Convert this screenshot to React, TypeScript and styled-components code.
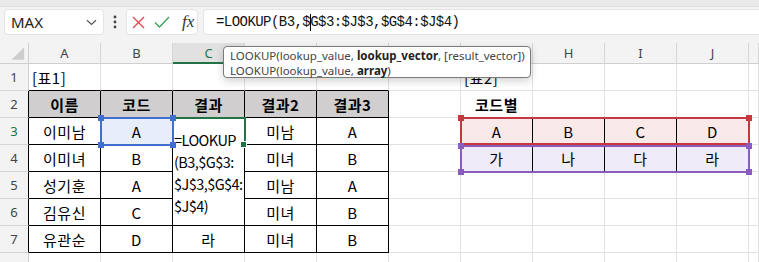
import React from 'react';
import styled, { createGlobalStyle } from 'styled-components';

const GlobalStyle = createGlobalStyle`
  html, body {
    margin: 0;
    padding: 0;
    background: #ffffff;
  }
  body {
    width: 759px;
    height: 262px;
    overflow: hidden;
    font-family: 'Noto Sans CJK KR', 'Noto Sans', sans-serif;
  }
`;

const COLS = ['A', 'B', 'C', 'D', 'E', 'F', 'G', 'H', 'I', 'J', 'K'];
const ROWS = [1, 2, 3, 4, 5, 6, 7, 8];

const table1: string[][] = [
  ['이름', '코드', '결과', '결과2', '결과3'],
  ['이미남', 'A', '', '미남', 'A'],
  ['이미녀', 'B', '', '미녀', 'B'],
  ['성기훈', 'A', '', '미남', 'A'],
  ['김유신', 'C', '', '미녀', 'B'],
  ['유관순', 'D', '라', '미녀', 'B'],
];

const table2: string[][] = [
  ['A', 'B', 'C', 'D'],
  ['가', '나', '다', '라'],
];

const editLines = ['=LOOKUP', '(B3,$G$3:', '$J$3,$G$4:', '$J$4)'];

type CellInfo = {
  text: string;
  align: 'left' | 'center';
  bold?: boolean;
  bg?: string;
  right: boolean;
  bottom: boolean;
};

// r is the sheet row (1-based), c is the column index (A = 0)
const cellAt = (r: number, c: number): CellInfo => {
  const inT1 = r >= 2 && r <= 7 && c <= 4;
  const inT2 = r >= 3 && r <= 4 && c >= 6 && c <= 9;
  const info: CellInfo = {
    text: '',
    align: 'center',
    right: inT1 || inT2 || (c === 5 && (r === 3 || r === 4)),
    bottom: inT1 || inT2 || (r === 1 && c <= 4) || (r === 2 && c >= 6 && c <= 9),
  };
  if (r === 1 && c === 0) return { ...info, text: '[표1]', align: 'left' };
  if (r === 1 && c === 6) return { ...info, text: '[표2]', align: 'left' };
  if (r === 2 && c === 6) return { ...info, text: '코드별', bold: true };
  if (inT1) {
    return {
      ...info,
      text: table1[r - 2][c],
      bold: r === 2,
      bg: r === 2 ? '#d0cece' : r === 3 && c === 1 ? '#e8eef9' : undefined,
    };
  }
  if (inT2) {
    return { ...info, text: table2[r - 3][c - 6], bg: r === 3 ? '#f9e9e9' : '#efebf8' };
  }
  return info;
};

export default function App() {
  return (
    <>
      <GlobalStyle />
      <Toolbar>
        <TopStrip />
        <BarRow>
          <NameBox>
            <span>MAX</span>
            <svg width="11" height="7" viewBox="0 0 11 7">
              <path d="M1 1.2 L5.5 5.5 L10 1.2" fill="none" stroke="#555" strokeWidth="1.2" />
            </svg>
          </NameBox>
          <Dots>
            <svg width="4" height="14" viewBox="0 0 4 14">
              <circle cx="2" cy="2" r="1.4" fill="#444" />
              <circle cx="2" cy="7" r="1.4" fill="#444" />
              <circle cx="2" cy="12" r="1.4" fill="#444" />
            </svg>
          </Dots>
          <FxBox>
            <svg width="13" height="13" viewBox="0 0 13 13">
              <path d="M1 1 L12 12 M12 1 L1 12" stroke="#e0454c" strokeWidth="1.3" fill="none" />
            </svg>
            <svg width="16" height="12" viewBox="0 0 16 12">
              <path d="M1 6.5 L5.5 11 L15 1" stroke="#3aa05a" strokeWidth="1.3" fill="none" />
            </svg>
            <Fx>fx</Fx>
          </FxBox>
          <FormulaBox>
            =LOOKUP(B3,$<Caret />G$3:$J$3,$G$4:$J$4)
          </FormulaBox>
        </BarRow>
      </Toolbar>

      <Sheet>
        <Corner>
          <svg width="29" height="21" viewBox="0 0 29 21">
            <polygon points="12,17 25,17 25,4" fill="#cdcdcd" />
          </svg>
        </Corner>
        {COLS.map((col, c) => (
          <ColHead key={col} $gc={c + 2} $active={col === 'C'}>
            {col === 'K' ? '' : col}
          </ColHead>
        ))}

        {ROWS.map((r) => (
          <React.Fragment key={r}>
            <RowHead $gr={r + 1} $active={r === 3} $edge={r >= 2 && r <= 7}>
              {r}
            </RowHead>
            {COLS.map((col, c) => {
              const cell = cellAt(r, c);
              return (
                <Cell
                  key={col}
                  $gc={c + 2}
                  $gr={r + 1}
                  $align={cell.align}
                  $bold={cell.bold}
                  $bg={cell.bg}
                  $right={cell.right}
                  $bottom={cell.bottom}
                >
                  {cell.text}
                </Cell>
              );
            })}
          </React.Fragment>
        ))}

        <EditBox>
          {editLines.map((line) => (
            <div key={line}>{line}</div>
          ))}
        </EditBox>

        <ActiveBox>
          <FillHandle />
        </ActiveBox>

        <RangeBox $col="3" $row="4" $color="#3f6fd1" $mt={-1} $mb={-1}>
          <Handle $color="#3f6fd1" $x="left" $y="top" />
          <Handle $color="#3f6fd1" $x="right" $y="top" />
          <Handle $color="#3f6fd1" $x="left" $y="bottom" />
          <Handle $color="#3f6fd1" $x="right" $y="bottom" />
        </RangeBox>

        <RangeBox $col="8 / 12" $row="4" $color="#c8373f" $mt={-1} $mb={0}>
          <Handle $color="#c8373f" $x="left" $y="top" />
          <Handle $color="#c8373f" $x="right" $y="top" />
        </RangeBox>

        <RangeBox $col="8 / 12" $row="5" $color="#8a5cc0" $mt={0} $mb={-1}>
          <Handle $color="#8a5cc0" $x="left" $y="top" />
          <Handle $color="#8a5cc0" $x="right" $y="top" />
          <Handle $color="#8a5cc0" $x="left" $y="bottom" />
          <Handle $color="#8a5cc0" $x="right" $y="bottom" />
        </RangeBox>

        <Tooltip>
          <div>
            LOOKUP(lookup_value, <b>lookup_vector</b>, [result_vector])
          </div>
          <div>
            LOOKUP(lookup_value, <b>array</b>)
          </div>
        </Tooltip>
      </Sheet>
    </>
  );
}

const Toolbar = styled.div`
  height: 43px;
  background: #f3f3f3;
  display: flex;
  flex-direction: column;
`;

const TopStrip = styled.div`
  height: 6px;
  background: #eaeaea;
  border-bottom: 1px solid #dedede;
`;

const BarRow = styled.div`
  display: flex;
  align-items: flex-start;
  padding: 2px 0 0 4px;
`;

const NameBox = styled.div`
  box-sizing: border-box;
  width: 100px;
  height: 26px;
  background: #ffffff;
  border: 1px solid #e4e4e4;
  border-radius: 4px;
  display: flex;
  align-items: center;
  justify-content: space-between;
  padding: 0 6px 0 6px;
  font-family: 'Noto Sans', sans-serif;
  font-size: 15px;
  color: #222;
`;

const Dots = styled.div`
  width: 22px;
  height: 26px;
  display: flex;
  align-items: center;
  justify-content: center;
`;

const FxBox = styled.div`
  box-sizing: border-box;
  width: 72px;
  height: 26px;
  background: #ffffff;
  border: 1px solid #e4e4e4;
  border-radius: 4px;
  display: flex;
  align-items: center;
  gap: 9px;
  padding-left: 5px;
`;

const Fx = styled.span`
  font-family: 'Liberation Serif', serif;
  font-style: italic;
  font-size: 17px;
  color: #333;
  margin-left: 3px;
`;

const FormulaBox = styled.div`
  box-sizing: border-box;
  flex: 1;
  height: 26px;
  margin-left: 5px;
  background: #ffffff;
  border: 1px solid #e4e4e4;
  border-right: none;
  border-radius: 4px 0 0 4px;
  padding-left: 12px;
  display: flex;
  align-items: center;
  font-family: 'Liberation Mono', monospace;
  font-size: 14px;
  letter-spacing: -0.55px;
  color: #111;
  white-space: pre;
`;

const Caret = styled.span`
  display: inline-block;
  width: 1px;
  height: 17px;
  background: #000;
  margin: 0 -1px 0 0;
`;

const Sheet = styled.div`
  position: relative;
  display: grid;
  grid-template-columns: 29px repeat(10, 72px) 1fr;
  grid-template-rows: 21px repeat(8, 27px);
  background: #ffffff;
`;

const Corner = styled.div`
  grid-column: 1;
  grid-row: 1;
  background: #f3f3f3;
  border-right: 1px solid #cfcfcf;
  border-bottom: 1px solid #cfcfcf;
  box-sizing: border-box;
  display: flex;
  svg {
    display: block;
  }
`;

const ColHead = styled.div<{ $gc: number; $active?: boolean }>`
  grid-column: ${(p) => p.$gc};
  grid-row: 1;
  box-sizing: border-box;
  display: flex;
  align-items: center;
  justify-content: center;
  background: ${(p) => (p.$active ? '#e1e1e1' : '#f3f3f3')};
  border-right: 1px solid #d6d6d6;
  border-bottom: ${(p) => (p.$active ? '2px solid #217346' : '1px solid #cfcfcf')};
  font-family: 'Noto Sans', sans-serif;
  font-size: 13px;
  color: ${(p) => (p.$active ? '#217346' : '#444')};
`;

const RowHead = styled.div<{ $gr: number; $active?: boolean; $edge?: boolean }>`
  grid-column: 1;
  grid-row: ${(p) => p.$gr};
  box-sizing: border-box;
  display: flex;
  align-items: center;
  justify-content: center;
  background: #f3f3f3;
  border-right: 1px solid ${(p) => (p.$edge ? '#000' : '#cfcfcf')};
  border-bottom: 1px solid #d6d6d6;
  font-family: 'Noto Sans', sans-serif;
  font-size: 13px;
  color: ${(p) => (p.$active ? '#217346' : '#444')};
`;

const Cell = styled.div<{
  $gc: number;
  $gr: number;
  $align: 'left' | 'center';
  $bold?: boolean;
  $bg?: string;
  $right: boolean;
  $bottom: boolean;
}>`
  grid-column: ${(p) => p.$gc};
  grid-row: ${(p) => p.$gr};
  box-sizing: border-box;
  display: flex;
  align-items: center;
  justify-content: ${(p) => (p.$align === 'left' ? 'flex-start' : 'center')};
  padding: 0 3px;
  background: ${(p) => p.$bg || '#ffffff'};
  border-right: 1px solid ${(p) => (p.$right ? '#000' : '#e1e1e1')};
  border-bottom: 1px solid ${(p) => (p.$bottom ? '#000' : '#e1e1e1')};
  font-size: 15px;
  letter-spacing: 0.5px;
  font-weight: ${(p) => (p.$bold ? 700 : 400)};
  color: #000;
  white-space: nowrap;
`;

const EditBox = styled.div`
  grid-column: 4;
  grid-row: 4 / 8;
  z-index: 1;
  box-sizing: border-box;
  background: #ffffff;
  border-right: 1px solid #000;
  border-bottom: 1px solid #000;
  padding: 11px 0 0 1px;
  font-size: 14.5px;
  letter-spacing: -0.55px;
  line-height: 22px;
  color: #000;
  white-space: nowrap;
  overflow: hidden;
`;

const ActiveBox = styled.div`
  grid-column: 4;
  grid-row: 4;
  z-index: 2;
  position: relative;
  margin: -1px -1px 0 -1px;
  border: 2px solid #217346;
  border-bottom: none;
  pointer-events: none;
`;

const FillHandle = styled.div`
  position: absolute;
  right: -3px;
  bottom: -3px;
  width: 5px;
  height: 5px;
  background: #217346;
  border: 1px solid #ffffff;
`;

const RangeBox = styled.div<{ $col: string; $row: string; $color: string; $mt: number; $mb: number }>`
  grid-column: ${(p) => p.$col};
  grid-row: ${(p) => p.$row};
  z-index: 3;
  position: relative;
  margin: ${(p) => `${p.$mt}px -1px ${p.$mb}px -1px`};
  border: 2px solid ${(p) => p.$color};
  pointer-events: none;
`;

const Handle = styled.div<{ $color: string; $x: 'left' | 'right'; $y: 'top' | 'bottom' }>`
  position: absolute;
  ${(p) => p.$x}: -4px;
  ${(p) => p.$y}: -4px;
  width: 6px;
  height: 6px;
  background: ${(p) => p.$color};
`;

const Tooltip = styled.div`
  position: absolute;
  top: 3px;
  left: 223px;
  z-index: 5;
  box-sizing: border-box;
  width: 308px;
  height: 32px;
  padding: 1px 0 0 6px;
  background: #ffffff;
  border: 1px solid #7a7a7a;
  border-radius: 4px;
  box-shadow: 0 3px 8px rgba(0, 0, 0, 0.18);
  font-family: 'Noto Sans', sans-serif;
  font-size: 11.5px;
  line-height: 15px;
  color: #444;
  white-space: nowrap;

  b {
    color: #222;
    font-weight: 700;
  }
`;
